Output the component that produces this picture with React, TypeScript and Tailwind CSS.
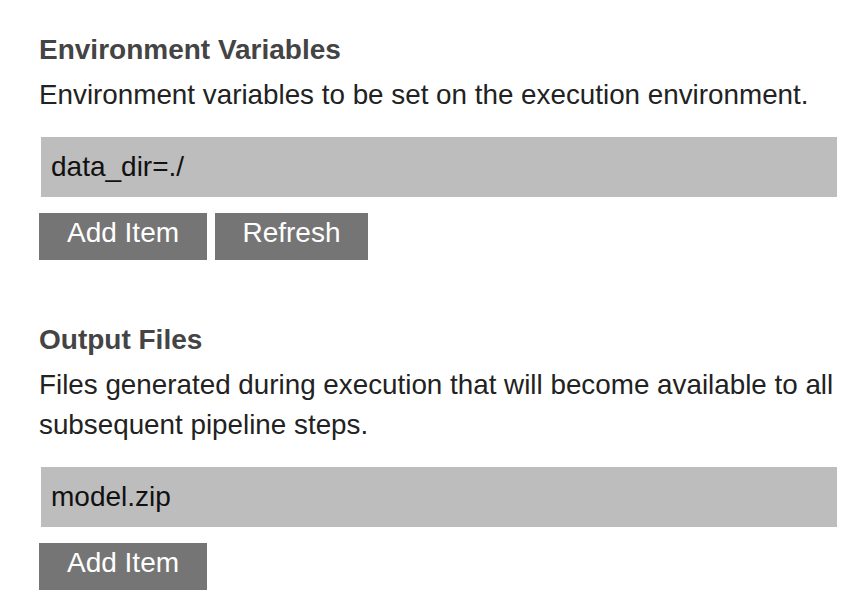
import React from 'react';

type Section = {
  title: string;
  description: string;
  items: string[];
  refresh?: boolean;
};

const sections: Section[] = [
  {
    title: 'Environment Variables',
    description: 'Environment variables to be set on the execution environment.',
    items: ['data_dir=./'],
    refresh: true,
  },
  {
    title: 'Output Files',
    description: 'Files generated during execution that will become available to all subsequent pipeline steps.',
    items: ['model.zip'],
  },
];

const Button: React.FC<{ label: string; width: string }> = ({ label, width }) => (
  <button
    className={`flex h-[47px] ${width} items-center justify-center bg-[#757575] pb-[8px] text-[28px] leading-[28px] text-white`}
  >
    {label}
  </button>
);

export default function App() {
  return (
    <div className="flex w-[852px] flex-col gap-[60px] bg-white pl-[39px] pr-[15px] pt-[30px] font-['Liberation_Sans',Arial,sans-serif]">
      {sections.map((section) => (
        <div key={section.title} className="flex flex-col">
          <h2 className="mb-[5px] text-[28px] font-bold leading-[40px] text-[#444444]">{section.title}</h2>
          {/* description runs a little past the input's right edge */}
          <p className="-mr-[14px] text-[27.8px] leading-[40px] text-[#222222]">{section.description}</p>
          <div className="mt-[22px] flex flex-col gap-2 pl-[2px]">
            {section.items.map((item) => (
              <div key={item} className="flex h-[60px] items-center bg-[#bdbdbd] px-[10px] text-[28px] text-[#111111]">
                {item}
              </div>
            ))}
          </div>
          <div className="mt-4 flex gap-2">
            <Button label="Add Item" width="w-[168px]" />
            {section.refresh && <Button label="Refresh" width="w-[153px]" />}
          </div>
        </div>
      ))}
    </div>
  );
}
